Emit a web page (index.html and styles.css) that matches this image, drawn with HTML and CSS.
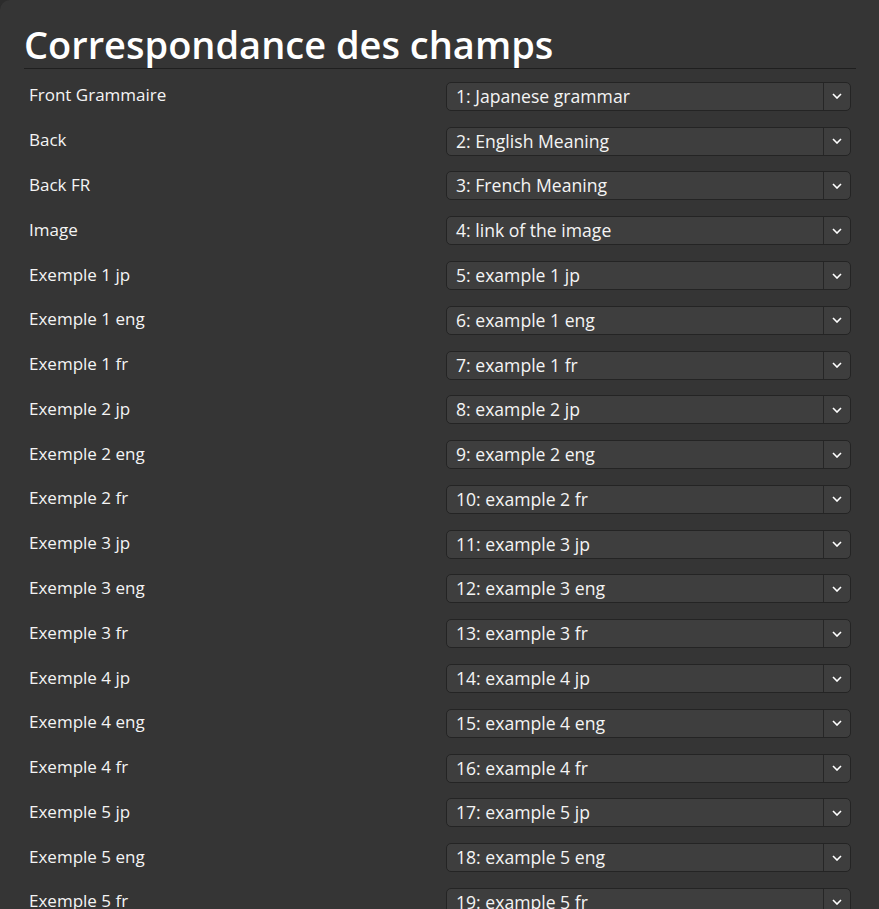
FILE: index.html
```html
<!DOCTYPE html>
<html lang="fr">
<head>
<meta charset="utf-8">
<title>Correspondance des champs</title>
<link rel="stylesheet" href="styles.css">
</head>
<body>
<div class="card">
  <h1 class="title">Correspondance des champs</h1>
  <div class="rows">
    <div class="row"><span class="label">Front Grammaire</span><div class="select"><span class="value">1: Japanese grammar</span><span class="arrow"><svg viewBox="0 0 10 6" width="10" height="6"><path d="M1 1l4 4 4-4" fill="none" stroke="#fff" stroke-width="1.6"/></svg></span></div></div>
    <div class="row"><span class="label">Back</span><div class="select"><span class="value">2: English Meaning</span><span class="arrow"><svg viewBox="0 0 10 6" width="10" height="6"><path d="M1 1l4 4 4-4" fill="none" stroke="#fff" stroke-width="1.6"/></svg></span></div></div>
    <div class="row"><span class="label">Back FR</span><div class="select"><span class="value">3: French Meaning</span><span class="arrow"><svg viewBox="0 0 10 6" width="10" height="6"><path d="M1 1l4 4 4-4" fill="none" stroke="#fff" stroke-width="1.6"/></svg></span></div></div>
    <div class="row"><span class="label">Image</span><div class="select"><span class="value">4: link of the image</span><span class="arrow"><svg viewBox="0 0 10 6" width="10" height="6"><path d="M1 1l4 4 4-4" fill="none" stroke="#fff" stroke-width="1.6"/></svg></span></div></div>
    <div class="row"><span class="label">Exemple 1 jp</span><div class="select"><span class="value">5: example 1 jp</span><span class="arrow"><svg viewBox="0 0 10 6" width="10" height="6"><path d="M1 1l4 4 4-4" fill="none" stroke="#fff" stroke-width="1.6"/></svg></span></div></div>
    <div class="row"><span class="label">Exemple 1 eng</span><div class="select"><span class="value">6: example 1 eng</span><span class="arrow"><svg viewBox="0 0 10 6" width="10" height="6"><path d="M1 1l4 4 4-4" fill="none" stroke="#fff" stroke-width="1.6"/></svg></span></div></div>
    <div class="row"><span class="label">Exemple 1 fr</span><div class="select"><span class="value">7: example 1 fr</span><span class="arrow"><svg viewBox="0 0 10 6" width="10" height="6"><path d="M1 1l4 4 4-4" fill="none" stroke="#fff" stroke-width="1.6"/></svg></span></div></div>
    <div class="row"><span class="label">Exemple 2 jp</span><div class="select"><span class="value">8: example 2 jp</span><span class="arrow"><svg viewBox="0 0 10 6" width="10" height="6"><path d="M1 1l4 4 4-4" fill="none" stroke="#fff" stroke-width="1.6"/></svg></span></div></div>
    <div class="row"><span class="label">Exemple 2 eng</span><div class="select"><span class="value">9: example 2 eng</span><span class="arrow"><svg viewBox="0 0 10 6" width="10" height="6"><path d="M1 1l4 4 4-4" fill="none" stroke="#fff" stroke-width="1.6"/></svg></span></div></div>
    <div class="row"><span class="label">Exemple 2 fr</span><div class="select"><span class="value">10: example 2 fr</span><span class="arrow"><svg viewBox="0 0 10 6" width="10" height="6"><path d="M1 1l4 4 4-4" fill="none" stroke="#fff" stroke-width="1.6"/></svg></span></div></div>
    <div class="row"><span class="label">Exemple 3 jp</span><div class="select"><span class="value">11: example 3 jp</span><span class="arrow"><svg viewBox="0 0 10 6" width="10" height="6"><path d="M1 1l4 4 4-4" fill="none" stroke="#fff" stroke-width="1.6"/></svg></span></div></div>
    <div class="row"><span class="label">Exemple 3 eng</span><div class="select"><span class="value">12: example 3 eng</span><span class="arrow"><svg viewBox="0 0 10 6" width="10" height="6"><path d="M1 1l4 4 4-4" fill="none" stroke="#fff" stroke-width="1.6"/></svg></span></div></div>
    <div class="row"><span class="label">Exemple 3 fr</span><div class="select"><span class="value">13: example 3 fr</span><span class="arrow"><svg viewBox="0 0 10 6" width="10" height="6"><path d="M1 1l4 4 4-4" fill="none" stroke="#fff" stroke-width="1.6"/></svg></span></div></div>
    <div class="row"><span class="label">Exemple 4 jp</span><div class="select"><span class="value">14: example 4 jp</span><span class="arrow"><svg viewBox="0 0 10 6" width="10" height="6"><path d="M1 1l4 4 4-4" fill="none" stroke="#fff" stroke-width="1.6"/></svg></span></div></div>
    <div class="row"><span class="label">Exemple 4 eng</span><div class="select"><span class="value">15: example 4 eng</span><span class="arrow"><svg viewBox="0 0 10 6" width="10" height="6"><path d="M1 1l4 4 4-4" fill="none" stroke="#fff" stroke-width="1.6"/></svg></span></div></div>
    <div class="row"><span class="label">Exemple 4 fr</span><div class="select"><span class="value">16: example 4 fr</span><span class="arrow"><svg viewBox="0 0 10 6" width="10" height="6"><path d="M1 1l4 4 4-4" fill="none" stroke="#fff" stroke-width="1.6"/></svg></span></div></div>
    <div class="row"><span class="label">Exemple 5 jp</span><div class="select"><span class="value">17: example 5 jp</span><span class="arrow"><svg viewBox="0 0 10 6" width="10" height="6"><path d="M1 1l4 4 4-4" fill="none" stroke="#fff" stroke-width="1.6"/></svg></span></div></div>
    <div class="row"><span class="label">Exemple 5 eng</span><div class="select"><span class="value">18: example 5 eng</span><span class="arrow"><svg viewBox="0 0 10 6" width="10" height="6"><path d="M1 1l4 4 4-4" fill="none" stroke="#fff" stroke-width="1.6"/></svg></span></div></div>
    <div class="row"><span class="label">Exemple 5 fr</span><div class="select"><span class="value">19: example 5 fr</span><span class="arrow"><svg viewBox="0 0 10 6" width="10" height="6"><path d="M1 1l4 4 4-4" fill="none" stroke="#fff" stroke-width="1.6"/></svg></span></div></div>
  </div>
</div>
</body>
</html>
```
FILE: styles.css
```css
html, body {
  margin: 0;
  padding: 0;
  background: #2c2c2c;
  height: 100%;
  overflow: hidden;
}
body {
  font-family: "Open Sans", "Noto Sans", sans-serif;
  color: #f4f4f4;
}
.card {
  background: #353535;
  border-top-left-radius: 10px;
  padding: 0 23px 0 24px;
  min-height: 100%;
  box-sizing: border-box;
}
.title {
  margin: 0;
  padding-top: 20px;
  font-size: 38px;
  font-weight: 600;
  line-height: 48px;
  color: #ffffff;
  border-bottom: 1px solid #1f1f1f;
}
.rows {
  display: flex;
  flex-direction: column;
  padding-top: 5px;
}
.row {
  display: grid;
  grid-template-columns: 1fr 1fr;
  column-gap: 12px;
  align-items: center;
  padding: 7.9px 5px;
}
.label {
  font-size: 17px;
  line-height: 24px;
  margin-top: -2px;
}
.select {
  display: flex;
  align-items: stretch;
  height: 29px;
  box-sizing: border-box;
  background: #3e3e3e;
  border: 1px solid #242424;
  border-radius: 5px;
}
.value {
  flex: 1;
  padding-left: 9px;
  font-size: 17.6px;
  line-height: 27px;
}
.arrow {
  width: 26px;
  border-left: 1px solid #262626;
  display: flex;
  align-items: center;
  justify-content: center;
}
```
